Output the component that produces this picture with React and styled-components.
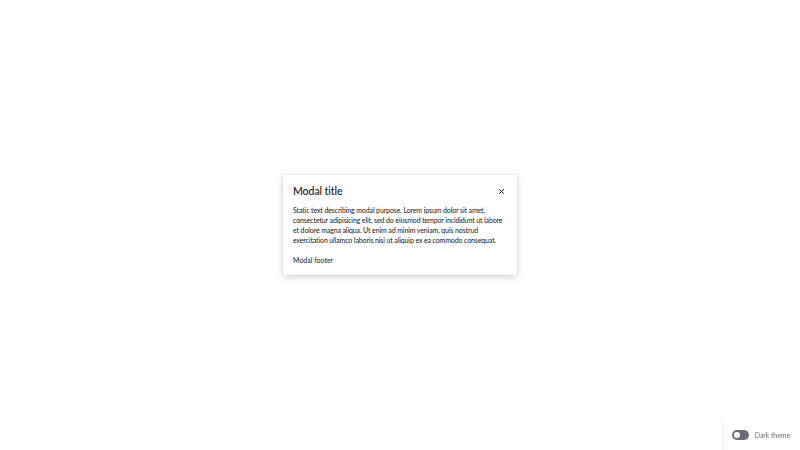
import React, { useState } from "react";
import styled, { createGlobalStyle } from "styled-components";

const GlobalStyle = createGlobalStyle`
    html, body {
        margin: 0;
        padding: 0;
        background: #ffffff;
    }
    body {
        font-family: "Lato", "Open Sans", sans-serif;
        color: #151515;
    }
`;

const Page = styled.div`
    height: 100vh;
    display: flex;
    align-items: center;
    justify-content: center;
`;

const Modal = styled.div`
    width: 234px;
    box-sizing: border-box;
    padding: 9px 10px 10px;
    background: #fff;
    box-shadow: 0 2px 8px rgba(3, 3, 3, 0.16), 0 0 3px rgba(3, 3, 3, 0.08);
    display: flex;
    flex-direction: column;
`;

const Header = styled.div`
    display: flex;
    align-items: center;
    justify-content: space-between;
`;

const Title = styled.h1`
    margin: 0;
    font-size: 10.6px;
    font-weight: 500;
    line-height: 14px;
    letter-spacing: -0.1px;
`;

const CloseButton = styled.button`
    border: none;
    background: none;
    padding: 0;
    width: 12px;
    height: 12px;
    display: flex;
    align-items: center;
    justify-content: center;
    cursor: pointer;
`;

const Body = styled.p`
    margin: 7px 0 0;
    font-size: 7px;
    line-height: 10px;
    letter-spacing: -0.12px;
`;

const Footer = styled.div`
    margin-top: 10px;
    font-size: 7px;
    line-height: 10px;
`;

const ThemeDock = styled.div`
    position: fixed;
    right: 0;
    bottom: 0;
    height: 30px;
    padding: 0 10px 0 9px;
    border-left: 1px solid #f0f0f0;
    display: flex;
    align-items: center;
    gap: 6px;
`;

const Track = styled.span`
    width: 17px;
    height: 10px;
    border-radius: 5px;
    background: ${(p) => (p.on ? "#0066cc" : "#6a6e73")};
    position: relative;
    cursor: pointer;
    &::after {
        content: "";
        position: absolute;
        top: 2px;
        left: ${(p) => (p.on ? "9px" : "2px")};
        width: 6px;
        height: 6px;
        border-radius: 50%;
        background: #fff;
    }
`;

const ThemeLabel = styled.span`
    font-size: 7px;
    letter-spacing: -0.1px;
    color: #6a6e73;
`;

export default function App() {
    const [dark, setDark] = useState(false);

    return (
        <Page>
            <GlobalStyle />
            <Modal role="dialog" aria-labelledby="modal-title">
                <Header>
                    <Title id="modal-title">Modal title</Title>
                    <CloseButton aria-label="Close">
                        <svg width="5" height="5" viewBox="0 0 10 10">
                            <path
                                d="M1 1 L9 9 M9 1 L1 9"
                                stroke="#151515"
                                strokeWidth="2"
                                strokeLinecap="round"
                            />
                        </svg>
                    </CloseButton>
                </Header>
                <Body>
                    Static text describing modal purpose. Lorem ipsum dolor sit
                    amet, consectetur adipisicing elit, sed do eiusmod tempor
                    incididunt ut labore et dolore magna aliqua. Ut enim ad minim
                    veniam, quis nostrud exercitation ullamco laboris nisi ut
                    aliquip ex ea commodo consequat.
                </Body>
                <Footer>Modal footer</Footer>
            </Modal>
            <ThemeDock>
                <Track on={dark ? 1 : 0} onClick={() => setDark(!dark)} />
                <ThemeLabel>Dark theme</ThemeLabel>
            </ThemeDock>
        </Page>
    );
}
